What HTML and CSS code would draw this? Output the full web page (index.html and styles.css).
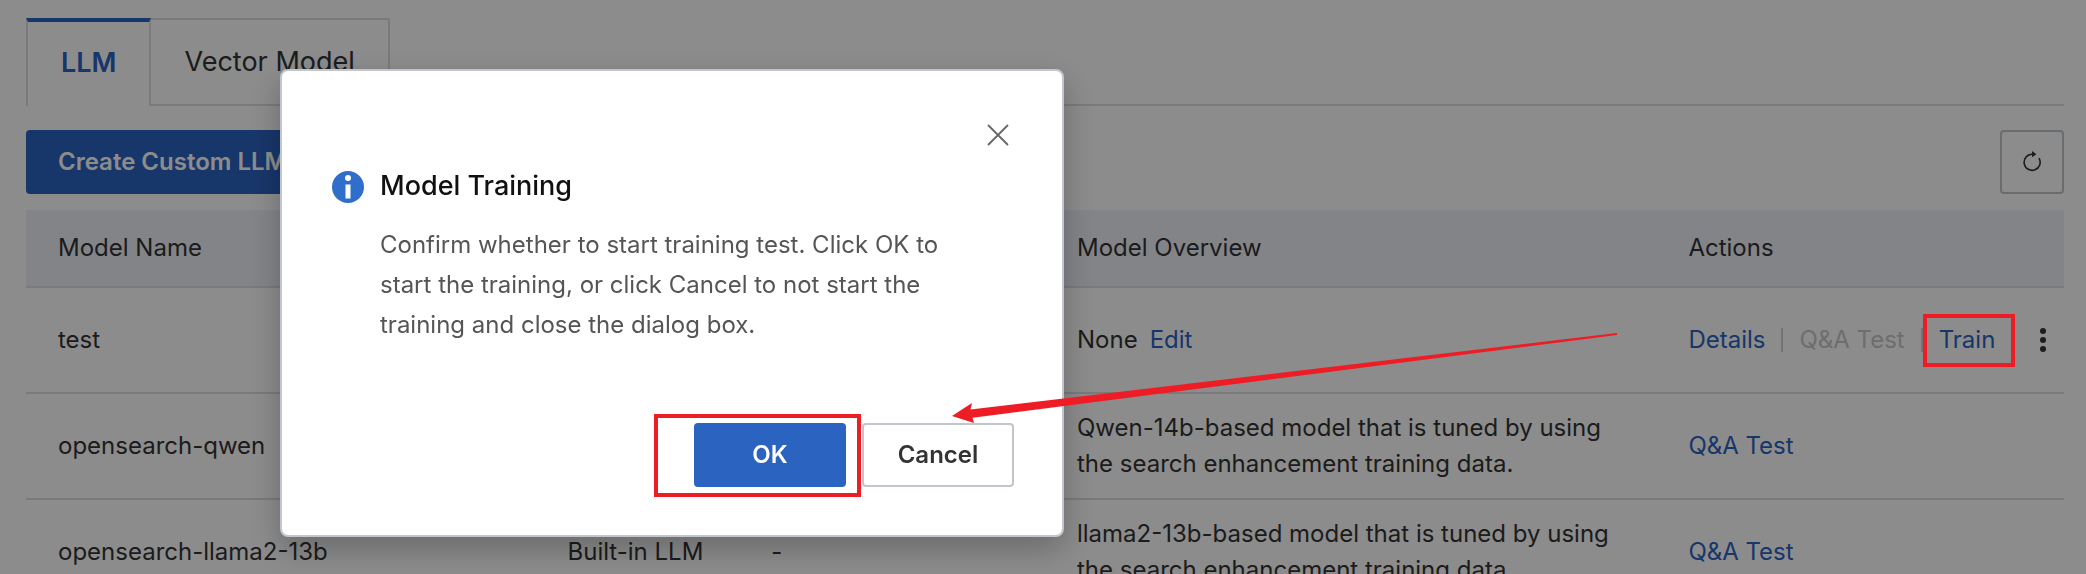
FILE: index.html
```html
<!DOCTYPE html>
<html lang="en">
<head>
    <meta charset="UTF-8">
    <meta name="viewport" content="width=device-width, initial-scale=1.0">
    <title>Model Management</title>
    <link rel="stylesheet" href="styles.css">
</head>
<body>
    <main class="page">
        <div class="tabs" role="tablist">
            <button class="tab active" type="button" role="tab" aria-selected="true">LLM</button>
            <button class="tab" type="button" role="tab" aria-selected="false">Vector Model</button>
            <div class="tabs-rest"></div>
        </div>

        <div class="toolbar">
            <button class="btn btn-primary" type="button">Create Custom LLM</button>
            <button class="btn-icon" type="button" aria-label="Refresh">
                <svg width="20" height="24" viewBox="0 0 20 24">
                    <path d="M17 8.2A8 8 0 1 1 10 4.3" fill="none" stroke="currentColor" stroke-width="1.6"/>
                    <path d="M10 1L14.4 4.2L10 7.2Z" fill="currentColor"/>
                </svg>
            </button>
        </div>

        <table class="models">
            <thead>
                <tr>
                    <th class="col-name">Model Name</th>
                    <th class="col-type"></th>
                    <th class="col-base"></th>
                    <th class="col-overview">Model Overview</th>
                    <th class="col-actions">Actions</th>
                </tr>
            </thead>
            <tbody>
                <tr>
                    <td>test</td>
                    <td></td>
                    <td></td>
                    <td><span class="overview">None <a href="#">Edit</a></span></td>
                    <td>
                        <div class="actions">
                            <a href="#">Details</a>
                            <span class="divider"></span>
                            <span class="disabled">Q&amp;A Test</span>
                            <span class="divider"></span>
                            <a class="mark mark-train" href="#">Train</a>
                            <button class="more" type="button" aria-label="More">
                                <svg width="8" height="26" viewBox="0 0 8 26" fill="currentColor">
                                    <circle cx="4" cy="4" r="3"/>
                                    <circle cx="4" cy="13" r="3"/>
                                    <circle cx="4" cy="22" r="3"/>
                                </svg>
                            </button>
                        </div>
                    </td>
                </tr>
                <tr>
                    <td>opensearch-qwen</td>
                    <td></td>
                    <td></td>
                    <td>Qwen-14b-based model that is tuned by using the search enhancement training data.</td>
                    <td><a href="#">Q&amp;A Test</a></td>
                </tr>
                <tr>
                    <td>opensearch-llama2-13b</td>
                    <td>Built-in LLM</td>
                    <td>-</td>
                    <td>llama2-13b-based model that is tuned by using the search enhancement training data.</td>
                    <td><a href="#">Q&amp;A Test</a></td>
                </tr>
            </tbody>
        </table>
    </main>

    <div class="overlay">
        <div class="dialog" role="dialog" aria-labelledby="dialogTitle">
            <button class="close" type="button" aria-label="Close">
                <svg width="22" height="22" viewBox="0 0 22 22">
                    <path d="M1.5 1.5L20.5 20.5M20.5 1.5L1.5 20.5" stroke="currentColor" stroke-width="1.8" stroke-linecap="round"/>
                </svg>
            </button>
            <div class="dialog-title">
                <svg width="32" height="32" viewBox="0 0 32 32">
                    <circle cx="16" cy="16" r="16" fill="#2f6fcb"/>
                    <circle cx="16" cy="7" r="3" fill="#fff"/>
                    <rect x="13.5" y="13.5" width="5" height="14" fill="#fff"/>
                </svg>
                <h2 id="dialogTitle">Model Training</h2>
            </div>
            <p class="dialog-text">Confirm whether to start training test. Click OK to start the training, or click Cancel to not start the training and close the dialog box.</p>
            <div class="dialog-footer">
                <button class="btn btn-primary mark mark-ok" type="button">OK</button>
                <button class="btn btn-default" type="button">Cancel</button>
            </div>
        </div>
    </div>

    <svg class="arrow" width="666" height="92" viewBox="951 332 666 92">
        <path d="M952 416L972 403L970.5 409.5L1617 333V335L972.5 417.8L974 423Z" fill="#ee1c24"/>
    </svg>
</body>
</html>
```

FILE: styles.css
```css
* {
    box-sizing: border-box;
}
body {
    margin: 0;
    height: 100vh;
    overflow: hidden;
    background: #fff;
    color: #333;
    font-family: Inter, "Liberation Sans", sans-serif;
    font-size: 24px;
    line-height: 36px;
}
button {
    font: inherit;
    color: inherit;
    cursor: pointer;
}
a {
    color: #2b63c1;
    text-decoration: none;
}
.page {
    padding: 18px 22px 0 26px;
}

/* Tabs */
.tabs {
    display: flex;
}
.tab {
    height: 88px;
    padding: 0 33px;
    border: 2px solid #dedede;
    border-left: none;
    border-radius: 0 2px 0 0;
    background: none;
    font-size: 27px;
}
.tab.active {
    padding-bottom: 2px;
    border-left: 2px solid #dedede;
    border-top: 4px solid #2b63c1;
    border-bottom: none;
    border-radius: 0;
    color: #2b63c1;
    font-weight: 600;
}
.tabs-rest {
    flex: 1;
    border-bottom: 2px solid #dedede;
}

/* Toolbar */
.toolbar {
    display: flex;
    justify-content: space-between;
    margin: 24px 0 16px;
}
.btn {
    height: 64px;
    padding: 0 32px;
    border: none;
    border-radius: 4px;
    font-weight: 600;
}
.btn-primary {
    background: #2b63c1;
    color: #fff;
}
.btn-default {
    border: 2px solid #c0c6cc;
    background: #fff;
}
.btn-icon {
    display: flex;
    align-items: center;
    justify-content: center;
    width: 64px;
    height: 64px;
    border: 2px solid #c0c6cc;
    border-radius: 4px;
    background: none;
}

/* Table */
.models {
    width: 100%;
    table-layout: fixed;
    border-collapse: separate;
    border-spacing: 0;
}
.models th,
.models td {
    padding: 0 32px;
    border-bottom: 2px solid #dedede;
    text-align: left;
    font-weight: 400;
}
.models th {
    height: 78px;
    background: #eff1f8;
}
.models td {
    height: 106px;
}
.models td:last-child {
    padding-right: 16px;
}
.col-name {
    width: 25%;
}
.col-type {
    width: 10%;
}
.col-base {
    width: 15%;
}
.col-overview {
    width: 30%;
}
.col-actions {
    width: 20%;
}
.overview {
    display: flex;
    gap: 12px;
}
.actions {
    display: flex;
    align-items: center;
    gap: 16px;
    white-space: nowrap;
}
.divider {
    flex: none;
    width: 2px;
    height: 24px;
    background: #d2d2d2;
}
.disabled {
    color: #c8c8c8;
}
.more {
    display: flex;
    margin-left: 28px;
    padding: 0;
    border: none;
    background: none;
}

/* Dialog */
.overlay {
    position: fixed;
    inset: 0;
    padding: 69px 0 0 280px;
    background: rgba(0, 0, 0, 0.45);
}
.dialog {
    display: flex;
    flex-direction: column;
    width: 784px;
    padding: 48px 48px 48px 50px;
    border: 2px solid #c0c6cc;
    border-radius: 8px;
    background: #fff;
    box-shadow: 0 12px 32px rgba(0, 0, 0, 0.25);
}
.close {
    display: flex;
    align-items: center;
    justify-content: center;
    align-self: flex-end;
    width: 32px;
    height: 32px;
    padding: 0;
    border: none;
    background: none;
    color: #666;
}
.dialog-title {
    display: flex;
    align-items: center;
    gap: 16px;
    margin-top: 16px;
}
.dialog-title h2 {
    margin: 0;
    padding-bottom: 2px;
    color: #111;
    font-size: 27px;
    font-weight: 500;
    line-height: 38px;
}
.dialog-text {
    margin: 18px 56px 78px 48px;
    color: #555;
    line-height: 40px;
}
.dialog-footer {
    display: flex;
    justify-content: flex-end;
    gap: 16px;
}
.dialog-footer .btn {
    width: 152px;
}

/* Red callouts */
.mark {
    position: relative;
}
.mark::after {
    content: "";
    position: absolute;
    border: 4px solid #ee1c24;
    z-index: 10;
    pointer-events: none;
}
.mark-train::after {
    inset: -8px -20px -9px -16px;
}
.mark-ok::after {
    inset: -9px -15px -10px -40px;
}
.arrow {
    position: absolute;
    left: 951px;
    top: 332px;
    z-index: 10;
    pointer-events: none;
}
```
